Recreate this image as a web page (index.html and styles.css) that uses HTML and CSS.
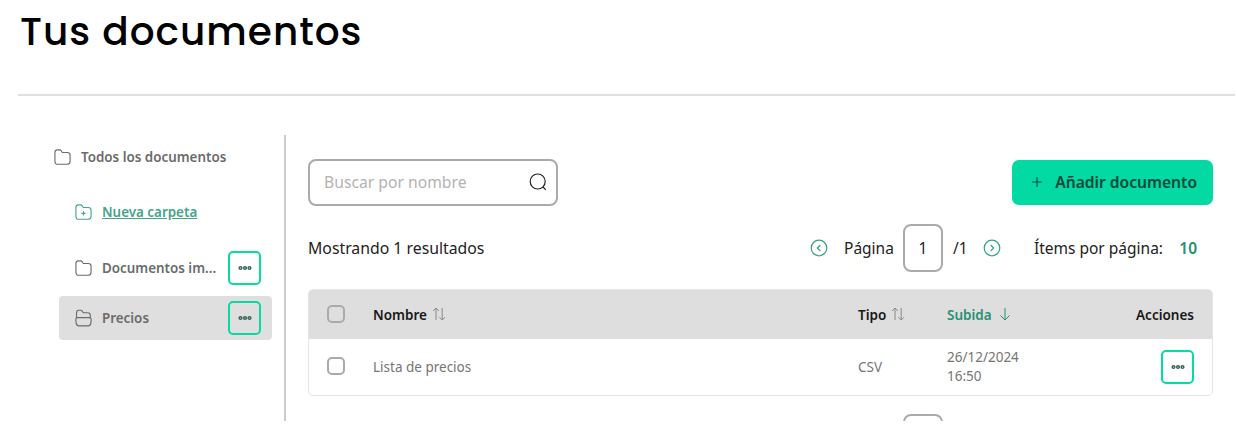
FILE: index.html
```html
<!DOCTYPE html>
<html lang="es">
<head>
  <meta charset="UTF-8" />
  <meta name="viewport" content="width=device-width, initial-scale=1.0"/>
  <title>Tus documentos</title>
  <link rel="stylesheet" href="styles.css">
</head>
<body>
  <!-- Iconos -->
  <svg class="sprite">
    <symbol id="carpeta" viewBox="0 0 18 18">
      <path d="M1 13.5V4Q1 1.5 3.5 1.5H6Q7 1.5 7.6 2.4L8.3 3.5Q8.8 4.2 9.8 4.2H14Q17 4.2 17 7V13.5Q17 16.7 14 16.7H4Q1 16.7 1 13.5Z"/>
    </symbol>
    <symbol id="carpeta-nueva" viewBox="0 0 18 18">
      <path d="M1 13.5V4Q1 1.5 3.5 1.5H6Q7 1.5 7.6 2.4L8.3 3.5Q8.8 4.2 9.8 4.2H14Q17 4.2 17 7V13.5Q17 16.7 14 16.7H4Q1 16.7 1 13.5ZM9 8.3V12.7M6.8 10.5H11.2"/>
    </symbol>
    <symbol id="carpeta-abierta" viewBox="0 0 18 18">
      <path d="M1.6 9V3.6Q1.6 0.8 4 0.8H6Q7 0.8 7.6 1.7L8.3 2.8Q8.8 3.5 9.8 3.5H13.4Q16.2 3.5 16.2 6.3V9M3.3 8.6H14.7Q17.4 8.6 17.1 11.1L16.8 14.2Q16.5 17.3 14 17.3H4Q1.5 17.3 1.2 14.2L0.9 11.1Q0.6 8.6 3.3 8.6Z"/>
    </symbol>
    <symbol id="puntos" viewBox="0 0 14 6">
      <circle cx="2.5" cy="3" r="1.35"/><circle cx="7" cy="3" r="1.35"/><circle cx="11.5" cy="3" r="1.35"/>
    </symbol>
    <symbol id="orden" viewBox="0 0 14 14">
      <path d="M4 13V1M1.2 4L4 1L6.8 4M10.2 1V13M7.4 10.2L10.2 13L13 10.2"/>
    </symbol>
  </svg>

  <div class="pagina">
    <h1>Tus documentos</h1>

    <div class="contenido">
      <nav class="carpetas">
        <a class="carpeta raiz"><svg class="icono"><use href="#carpeta"/></svg><span>Todos los documentos</span></a>
        <a class="carpeta nueva"><svg class="icono"><use href="#carpeta-nueva"/></svg><span>Nueva carpeta</span></a>
        <div class="carpeta">
          <svg class="icono"><use href="#carpeta"/></svg><span>Documentos im...</span>
          <button class="btn-menu"><svg><use href="#puntos"/></svg></button>
        </div>
        <div class="carpeta activa">
          <svg class="icono"><use href="#carpeta-abierta"/></svg><span>Precios</span>
          <button class="btn-menu"><svg><use href="#puntos"/></svg></button>
        </div>
      </nav>

      <main>
        <div class="barra">
          <div class="buscador">
            <input type="text" placeholder="Buscar por nombre">
            <svg viewBox="0 0 18 18"><circle cx="8.7" cy="8.5" r="7.5"/><path d="M14 14L16.8 16.8"/></svg>
          </div>
          <button class="btn-anadir">
            <svg viewBox="0 0 10 10"><path d="M5 0V10M0 5H10"/></svg>
            <span>Añadir documento</span>
          </button>
        </div>

        <div class="paginacion">
          <span class="total">Mostrando 1 resultados</span>
          <svg class="flecha" viewBox="0 0 18 18"><circle cx="9" cy="9" r="7.8"/><path d="M10.3 6L7.3 9L10.3 12"/></svg>
          <span class="etiqueta">Página</span>
          <input class="num-pagina" type="text" value="1">
          <span class="de">/1</span>
          <svg class="flecha" viewBox="0 0 18 18"><circle cx="9" cy="9" r="7.8"/><path d="M7.7 6L10.7 9L7.7 12"/></svg>
          <span class="items">Ítems por página:</span>
          <b class="cantidad">10</b>
        </div>

        <div class="tabla">
          <div class="fila cabecera">
            <input type="checkbox">
            <span class="col">Nombre <svg><use href="#orden"/></svg></span>
            <span class="col">Tipo <svg><use href="#orden"/></svg></span>
            <span class="col ordenada">Subida <svg viewBox="0 0 14 14"><path d="M7 1V13M2.5 8.5L7 13L11.5 8.5"/></svg></span>
            <span class="acciones">Acciones</span>
          </div>
          <div class="fila">
            <input type="checkbox">
            <span>Lista de precios</span>
            <span>CSV</span>
            <span class="fecha">26/12/2024 16:50</span>
            <span class="acciones"><button class="btn-menu"><svg><use href="#puntos"/></svg></button></span>
          </div>
        </div>

        <div class="paginacion inferior">
          <input class="num-pagina" type="text" value="1">
        </div>
      </main>
    </div>
  </div>
</body>
</html>
```

FILE: styles.css
```css
* {
  box-sizing: border-box;
}

body {
  margin: 0;
  font-family: "Noto Sans", sans-serif;
  font-size: 15.5px;
  color: #222;
  background: #fff;
}

svg {
  fill: none;
  stroke: currentColor;
  flex-shrink: 0;
}

input, button {
  font: inherit;
  color: inherit;
  margin: 0;
}

.sprite {
  display: none;
}

.pagina {
  height: 421px;
  width: 1235px;
  padding-left: 18px;
  overflow: hidden;
}

h1 {
  margin: 0;
  height: 96px;
  padding: 8px 0 0 2px;
  border-bottom: 2px solid #e0e0e0;
  font-family: Poppins, Inter, sans-serif;
  font-size: 39px;
  font-weight: 500;
  line-height: 48px;
  letter-spacing: 1px;
  color: #000;
  white-space: nowrap;
}

.contenido {
  display: flex;
  margin-top: 39px;
  height: 286px;
}

.carpetas {
  width: 268px;
  padding-left: 41px;
  padding-right: 12px;
  border-right: 2px solid #ccc;
  font-size: 13.4px;
  font-weight: 600;
  color: #6b6b6b;
}

.carpeta {
  display: flex;
  align-items: center;
  height: 44px;
  margin-bottom: 6px;
  padding: 0 11px 0 16px;
  border-radius: 4px;
  white-space: nowrap;
}

.carpeta .icono {
  width: 17px;
  height: 18px;
  margin-right: 10px;
  stroke-width: 1.2;
}

.carpeta .btn-menu {
  margin-left: auto;
}

.raiz {
  margin: 0 0 11px -21px;
}

.nueva {
  margin-bottom: 12px;
  color: #43a58a;
}

.nueva span {
  text-decoration: underline;
}

.activa {
  background: #dfdfdf;
}

.btn-menu {
  display: flex;
  align-items: center;
  justify-content: center;
  width: 33px;
  height: 34px;
  padding: 0;
  border: 2px solid #04dba5;
  border-radius: 5px;
  background: #fff;
  color: #37665a;
}

.activa .btn-menu {
  background: transparent;
}

.btn-menu svg {
  width: 14px;
  height: 6px;
  stroke-width: 1.5;
}

main {
  width: 905px;
  margin-left: 22px;
  padding-top: 24px;
}

.barra {
  display: flex;
  justify-content: space-between;
}

.buscador {
  display: flex;
  align-items: center;
  width: 250px;
  height: 47px;
  padding: 0 9px 1px 14px;
  border: 2px solid #aaa;
  border-radius: 8px;
  font-size: 15.7px;
}

.buscador input {
  flex: 1;
  min-width: 0;
  padding: 0;
  border: none;
  outline: none;
}

.buscador input::placeholder {
  color: #b3b3b3;
}

.buscador svg {
  width: 18px;
  height: 18px;
  margin-bottom: 1px;
  stroke-width: 1.2;
}

.btn-anadir {
  display: flex;
  align-items: center;
  justify-content: flex-end;
  width: 201px;
  height: 45px;
  margin-top: 1px;
  padding: 0 16px 1px 0;
  border: none;
  border-radius: 7px;
  background: #02d9a3;
  color: #07483a;
  font-size: 15.6px;
  font-weight: 600;
  white-space: nowrap;
}

.btn-anadir svg {
  width: 10px;
  height: 10px;
  margin-right: 13px;
}

.paginacion {
  display: flex;
  align-items: center;
  height: 48px;
  margin-top: 18px;
  white-space: nowrap;
}

.total {
  width: 502px;
  font-size: 15.8px;
}

.flecha {
  width: 18px;
  height: 18px;
  margin-bottom: 1px;
  color: #38a085;
  stroke-width: 1.2;
}

.etiqueta {
  width: 59px;
  padding-left: 16px;
  margin-right: 16px;
}

.num-pagina {
  width: 40px;
  height: 48px;
  padding: 0;
  border: 2px solid #aaa;
  border-radius: 8px;
  text-align: center;
}

.de {
  width: 40px;
  padding-left: 10px;
}

.items {
  margin-left: auto;
}

.cantidad {
  width: 34px;
  margin-right: 16px;
  text-align: right;
  font-weight: 600;
  color: #23906f;
}

.tabla {
  margin-top: 17px;
  border: 1px solid #e5e5e5;
  border-radius: 5px;
  overflow: hidden;
  font-size: 13.5px;
  color: #757575;
}

.fila {
  display: grid;
  grid-template-columns: 46px 485px 89px 110px 1fr;
  align-items: center;
  height: 56px;
  padding: 0 18px;
}

.cabecera {
  height: 49px;
  background: #dedede;
  color: #171717;
  font-weight: 600;
}

.col {
  display: flex;
  align-items: center;
}

.col svg {
  width: 14px;
  height: 14px;
  margin-left: 5px;
  margin-bottom: 1px;
  color: #888;
}

.ordenada, .ordenada svg {
  color: #269275;
}

.ordenada svg {
  margin-left: 6px;
}

.fecha {
  width: 80px;
  line-height: 19px;
}

.acciones {
  justify-self: end;
}

input[type="checkbox"] {
  appearance: none;
  width: 18px;
  height: 18px;
  margin-bottom: 2px;
  border: 2px solid #aaa;
  border-radius: 5px;
}

.inferior {
  padding-left: 595px;
}
```
